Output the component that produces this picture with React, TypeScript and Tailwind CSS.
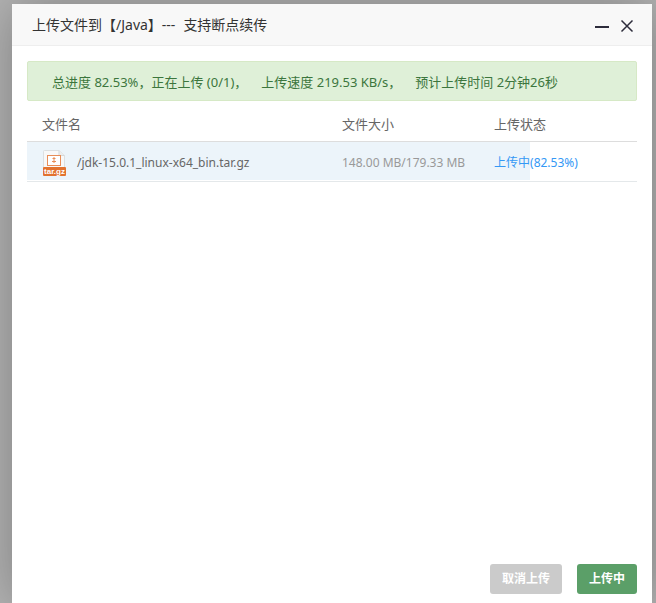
import React from "react";

type Upload = {
  name: string;
  size: string;
  status: string;
  percent: number;
};

const uploads: Upload[] = [
  {
    name: "/jdk-15.0.1_linux-x64_bin.tar.gz",
    size: "148.00 MB/179.33 MB",
    status: "上传中",
    percent: 82.53,
  },
];

function ArchiveIcon() {
  return (
    <svg className="shrink-0" width="24" height="26" viewBox="0 0 24 26" aria-hidden="true">
      <path d="M1.5 1.5a1 1 0 0 1 1-1H17l5.500 5V25h-21z" fill="#f8f8f8" stroke="#dcdfe0" />
      <path d="M17 .5v5h5.500" fill="#eceeee" stroke="#d5d9da" />
      <rect x="5.500" y="5.500" width="13" height="10" fill="#fff" stroke="#e88d57" />
      <path d="M12 7v6M10.500 8.500h3M10 11.500h4" fill="none" stroke="#e88d57" />
      <rect x="1" y="17" width="23" height="9" rx="1" fill="#e2722f" />
      <text
        x="12.5"
        y="24"
        textAnchor="middle"
        fontSize="8"
        fontWeight="700"
        fill="#fff"
        fontFamily="Liberation Sans, sans-serif"
      >
        tar.gz
      </text>
    </svg>
  );
}

function Header() {
  return (
    <header className="flex h-[42px] items-center justify-between border-b border-[#eee] bg-[#f8f8f8] pr-[17px] pl-5">
      <h1 className="flex gap-2 text-sm text-[#333]">
        <span>上传文件到【/Java】---</span>
        <span>支持断点续传</span>
      </h1>
      <div className="flex items-center gap-[9px] pt-1 text-[#2d2c3b]">
        <button type="button" aria-label="最小化" className="flex size-4 items-center justify-center">
          <svg width="16" height="16" viewBox="0 0 16 16">
            <path d="M1 8h14" stroke="currentColor" strokeWidth="2" />
          </svg>
        </button>
        <button type="button" aria-label="关闭" className="flex size-4 items-center justify-center">
          <svg width="16" height="16" viewBox="0 0 16 16">
            <path d="M2.5 1.5l11 11M13.5 1.5l-11 11" stroke="currentColor" strokeWidth="1.5" />
          </svg>
        </button>
      </div>
    </header>
  );
}

export default function App() {
  return (
    <div className="flex min-h-screen bg-[#b3b3b3] pt-1 pr-1 pl-3 font-['Noto_Sans','Noto_Sans_CJK_SC',sans-serif] text-[13px] text-[#666]">
      <main className="flex flex-1 flex-col bg-white shadow-[1px_1px_50px_rgba(0,0,0,0.3)]">
        <Header />
        <div className="flex-1 px-[15px] pt-[15px]">
          <p className="flex h-10 items-center gap-[14px] rounded-xs border border-[#d6e9c6] bg-[#dff0d8] px-6 pt-1 whitespace-nowrap text-[#3c763d]">
            <span>总进度 82.53%，正在上传 (0/1)，</span>
            <span>上传速度 219.53 KB/s，</span>
            <span>预计上传时间 2分钟26秒</span>
          </p>
          <table className="w-full table-fixed border-collapse text-left">
            <thead>
              <tr className="h-10 border-b border-[#ddd]">
                <th className="w-[300px] pt-2 pl-[15px] font-normal">文件名</th>
                <th className="w-[152px] pt-2 pl-[15px] font-normal">文件大小</th>
                <th className="pt-2 pl-[15px] font-normal">上传状态</th>
              </tr>
            </thead>
            <tbody className="text-xs">
              {uploads.map((file) => (
                <tr
                  key={file.name}
                  className="h-10 border-b border-[#e4e8ea] bg-[linear-gradient(#ecf4fa,#ecf4fa)] bg-no-repeat"
                  style={{ backgroundSize: `${file.percent}% 100%` }}
                >
                  <td className="pt-1 pl-[15px]">
                    <div className="flex items-center gap-[11px]">
                      <ArchiveIcon />
                      <span>{file.name}</span>
                    </div>
                  </td>
                  <td className="pt-1 pl-[15px] whitespace-nowrap text-[#999]">{file.size}</td>
                  <td className="pt-1 pl-[15px] text-[#3498f5]">
                    {file.status}({file.percent}%)
                  </td>
                </tr>
              ))}
            </tbody>
          </table>
        </div>
        <footer className="flex justify-end gap-[15px] px-[15px] pb-[9px] text-xs font-bold text-white">
          <button type="button" className="h-[30px] rounded-[3px] bg-[#cbcbcb] px-3">
            取消上传
          </button>
          <button type="button" className="h-[30px] rounded-[3px] bg-[#5b9f68] px-3">
            上传中
          </button>
        </footer>
      </main>
    </div>
  );
}
